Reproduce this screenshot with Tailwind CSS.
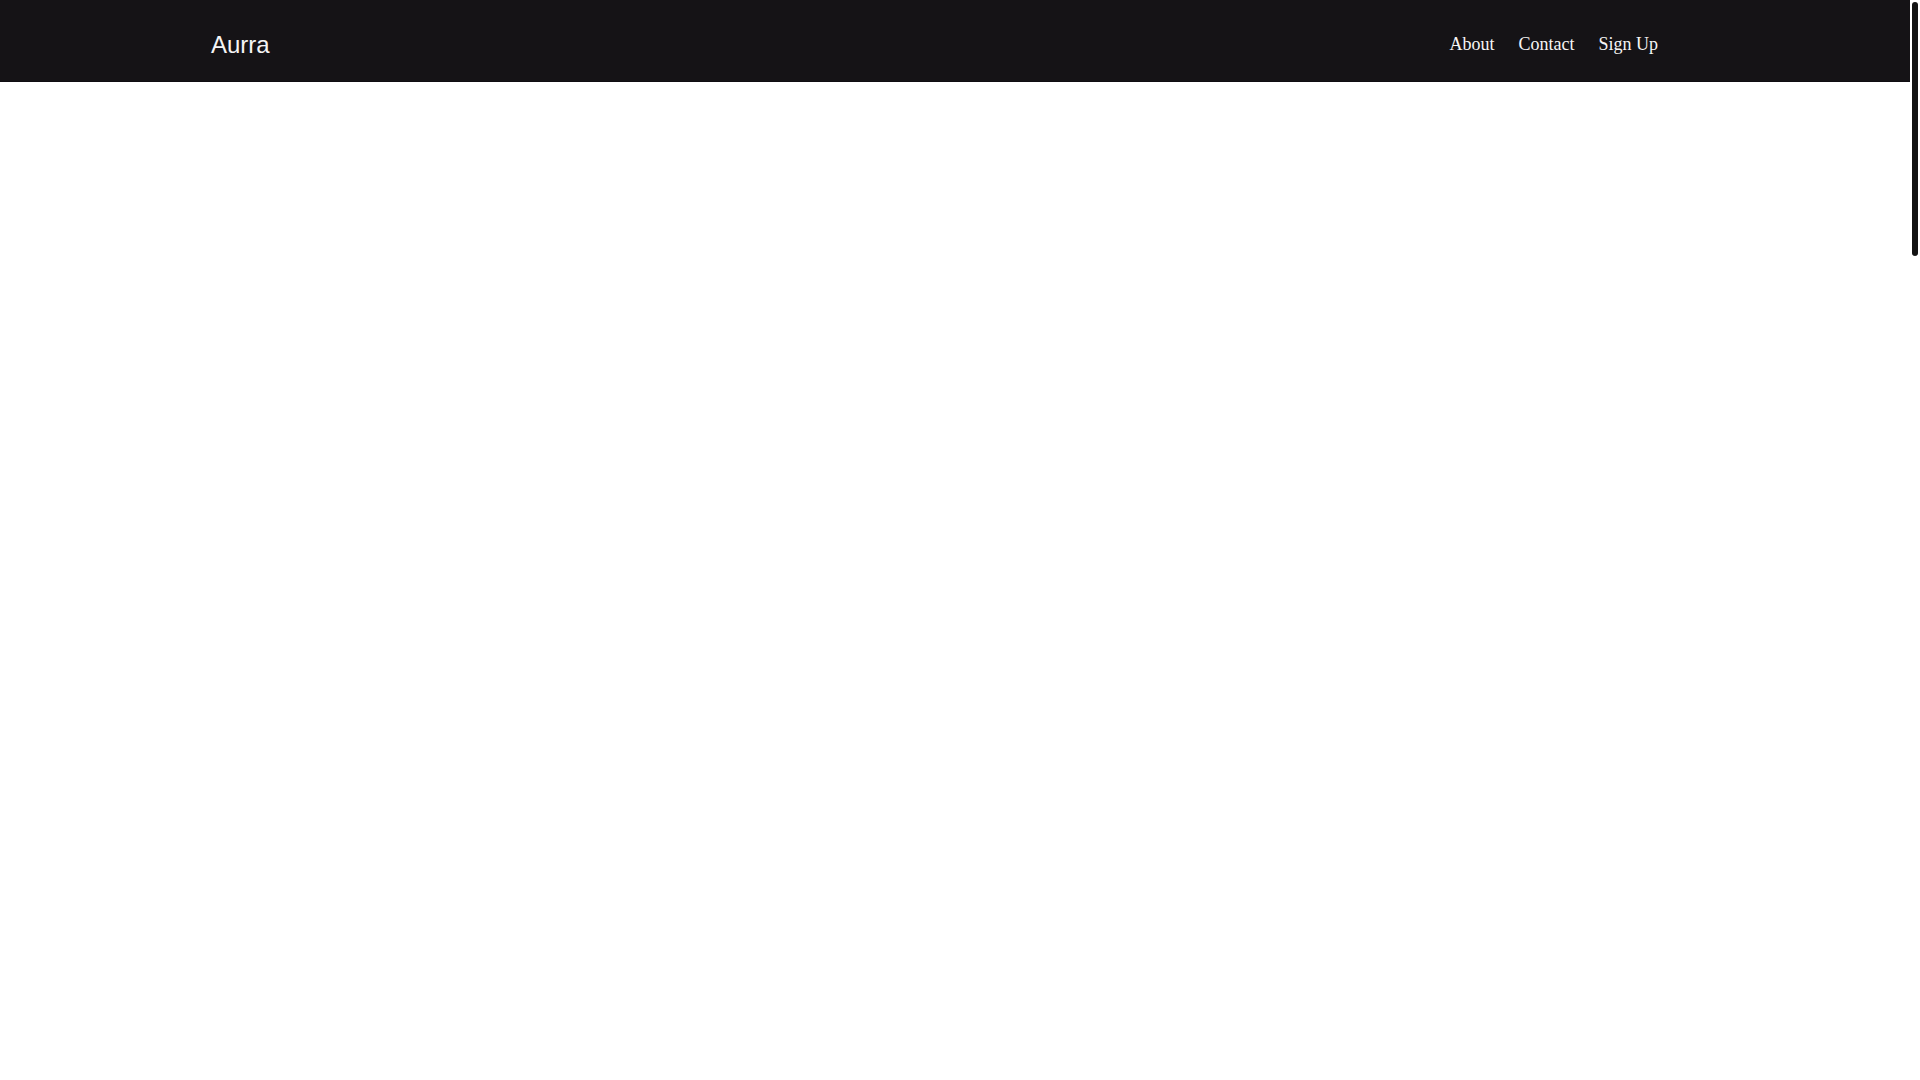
<!DOCTYPE html>
<html lang="en">
<head>
<meta charset="utf-8">
<title>Aurra</title>
<script src="https://cdn.jsdelivr.net/npm/@tailwindcss/browser@4"></script>
</head>
<body class="flex h-screen overflow-hidden bg-white">
<div class="flex-1">
<header class="flex h-[82px] items-center justify-between border-b border-[#100d12] bg-[#151316] pr-[252px] pl-[211px] text-[#f5f5f5]">
<a href="#" class="pt-2 font-['Liberation_Sans',sans-serif] text-2xl">Aurra</a>
<nav class="flex gap-6 pt-[7px] font-['Liberation_Serif',serif] text-lg">
<a href="#">About</a>
<a href="#">Contact</a>
<a href="#">Sign Up</a>
</nav>
</header>
<main></main>
</div>
<div class="w-[10px] bg-white p-0.5"><div class="h-[254px] rounded-full bg-[#121212]"></div></div>
</body>
</html>
